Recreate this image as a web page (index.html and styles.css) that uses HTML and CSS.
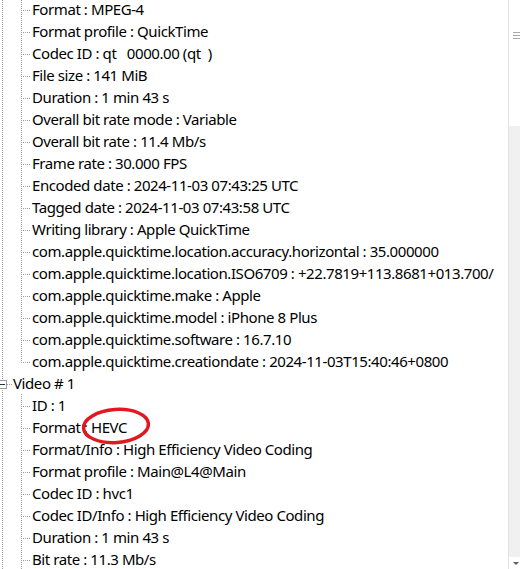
FILE: index.html
```html
<!DOCTYPE html>
<html lang="en">
<head>
    <meta charset="UTF-8">
    <title>MediaInfo - Tree</title>
    <link rel="stylesheet" href="styles.css">
</head>
<body>
    <div class="window">
        <div class="tree">
            <ul class="branch">
                <li>Format : MPEG-4</li>
                <li>Format profile : QuickTime</li>
                <li>Codec ID : qt   0000.00 (qt  )</li>
                <li>File size : 141 MiB</li>
                <li>Duration : 1 min 43 s</li>
                <li>Overall bit rate mode : Variable</li>
                <li>Overall bit rate : 11.4 Mb/s</li>
                <li>Frame rate : 30.000 FPS</li>
                <li>Encoded date : 2024-11-03 07:43:25 UTC</li>
                <li>Tagged date : 2024-11-03 07:43:58 UTC</li>
                <li>Writing library : Apple QuickTime</li>
                <li>com.apple.quicktime.location.accuracy.horizontal : 35.000000</li>
                <li>com.apple.quicktime.location.ISO6709 : +22.7819+113.8681+013.700/</li>
                <li>com.apple.quicktime.make : Apple</li>
                <li>com.apple.quicktime.model : iPhone 8 Plus</li>
                <li>com.apple.quicktime.software : 16.7.10</li>
                <li class="last">com.apple.quicktime.creationdate : 2024-11-03T15:40:46+0800</li>
            </ul>
            <div class="parent"><span class="toggle"></span><span class="label">Video # 1</span></div>
            <ul class="branch">
                <li>ID : 1</li>
                <li>Format : HEVC</li>
                <li>Format/Info : High Efficiency Video Coding</li>
                <li>Format profile : Main@L4@Main</li>
                <li>Codec ID : hvc1</li>
                <li>Codec ID/Info : High Efficiency Video Coding</li>
                <li>Duration : 1 min 43 s</li>
                <li>Bit rate : 11.3 Mb/s</li>
            </ul>
            <svg class="mark" width="80" height="44" viewBox="0 0 80 44">
                <ellipse cx="40" cy="22" rx="32.5" ry="16.5" transform="rotate(-4 40 22)" fill="none" stroke="#e01820" stroke-width="3.5"/>
            </svg>
        </div>
        <div class="scrollbar">
            <div class="thumb"><span class="grip"></span></div>
            <div class="track"></div>
            <div class="arrow"><span class="tri"></span></div>
        </div>
    </div>
</body>
</html>
```

FILE: styles.css
```css
html, body {
    margin: 0;
    height: 100%;
    overflow: hidden;
    background: #fff;
}
.window {
    display: flex;
    height: 569px;
    font-family: "Noto Sans", "Open Sans", sans-serif;
    font-size: 15px;
    letter-spacing: -0.42px;
    color: #000;
}
.tree {
    position: relative;
    flex: 1;
    min-width: 0;
    overflow: hidden;
    margin-top: -2px;
    background-image: repeating-linear-gradient(to bottom, #a0a0a0 0 1px, transparent 1px 2px);
    background-size: 1px 100%;
    background-position: 2px 0;
    background-repeat: no-repeat;
}
.branch {
    list-style: none;
    margin: 0;
    padding: 0;
}
.branch li {
    height: 22px;
    line-height: 22px;
    padding-left: 32px;
    white-space: pre;
    background-image:
        repeating-linear-gradient(to bottom, #a0a0a0 0 1px, transparent 1px 2px),
        repeating-linear-gradient(to right, #a0a0a0 0 1px, transparent 1px 2px);
    background-size: 1px 22px, 9px 1px;
    background-position: 21px 0, 21px 12px;
    background-repeat: no-repeat;
}
.branch li.last {
    background-size: 1px 13px, 9px 1px;
}
.parent {
    display: flex;
    align-items: center;
    height: 22px;
    line-height: 22px;
    background-image: repeating-linear-gradient(to right, #a0a0a0 0 1px, transparent 1px 2px);
    background-size: 5px 1px;
    background-position: 7px 12px;
    background-repeat: no-repeat;
}
.toggle {
    position: relative;
    box-sizing: border-box;
    width: 9px;
    height: 9px;
    margin-left: -2px;
    margin-top: 2px;
    border: 1px solid #9a9a9a;
    background: #fff;
}
.toggle::after {
    content: "";
    position: absolute;
    left: 1px;
    top: 3px;
    width: 5px;
    height: 1px;
    background: #333;
}
.label {
    margin-left: 6px;
}
.mark {
    position: absolute;
    left: 76px;
    top: 406px;
}
.scrollbar {
    display: flex;
    flex-direction: column;
    flex: none;
    width: 11px;
    border-left: 1px solid #e2e2e2;
}
.thumb {
    height: 126px;
    background: #fff;
    position: relative;
}
.grip {
    position: absolute;
    left: 4px;
    top: 32px;
    width: 7px;
    height: 5px;
    border-top: 1px solid #a8a8a8;
    border-bottom: 1px solid #a8a8a8;
    background: linear-gradient(#a8a8a8, #a8a8a8) 0 2px / 100% 1px no-repeat;
}
.track {
    flex: 1;
    background: #f0f0f0;
}
.arrow {
    height: 12px;
    background: #fff;
    position: relative;
}
.tri {
    position: absolute;
    left: 4px;
    top: 5px;
    width: 0;
    height: 0;
    border-left: 3px solid transparent;
    border-right: 3px solid transparent;
    border-top: 3px solid #606060;
}
```
